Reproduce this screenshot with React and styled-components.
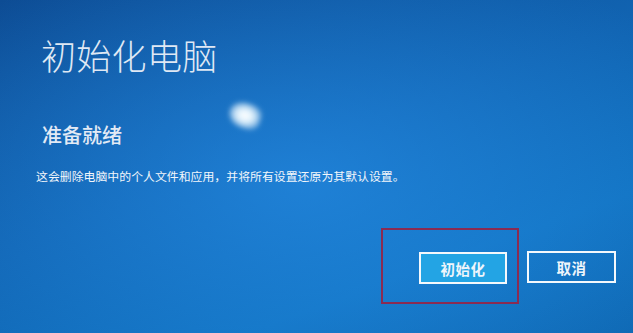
import React from 'react';
import styled, { createGlobalStyle } from 'styled-components';

const Global = createGlobalStyle`
  html, body {
    margin: 0;
    padding: 0;
    background: #0f5ca8;
  }
  body {
    font-family: "Noto Sans CJK SC", "Noto Sans", sans-serif;
  }
`;

const Screen = styled.div`
  position: relative;
  width: 633px;
  height: 333px;
  overflow: hidden;
  display: flex;
  flex-direction: column;
  color: #eef4fb;
  background:
    radial-gradient(ellipse 70% 75% at 48% 55%, rgba(40, 145, 235, 0.6), rgba(40, 140, 230, 0) 100%),
    linear-gradient(160deg, #0d4c94 0%, #1164b2 45%, #1172c0 75%, #0f69b4 100%);
`;

const Glare = styled.div`
  position: absolute;
  left: 229px;
  top: 103px;
  width: 32px;
  height: 25px;
  border-radius: 55% 45% 40% 60%;
  background: radial-gradient(ellipse at 50% 50%, #ffffff 0%, rgba(235, 248, 255, 0.95) 35%, rgba(120, 200, 255, 0) 100%);
  filter: blur(2.5px);
  transform: rotate(18deg);
`;

const Content = styled.div`
  display: flex;
  flex-direction: column;
  padding: 37px 0 0 41px;
`;

const Title = styled.h1`
  margin: 0;
  font-size: 35px;
  line-height: 35px;
  font-weight: 300;
  letter-spacing: 0.3px;
  color: #dfe8f4;
`;

const Subtitle = styled.h2`
  margin: 53px 0 0 1px;
  font-size: 20px;
  line-height: 20px;
  font-weight: 500;
  color: #e3eaf5;
`;

const Body = styled.p`
  margin: 24px 0 0 -5px;
  font-size: 11.9px;
  line-height: 13px;
  color: #f2f6fb;
`;

const Actions = styled.div`
  display: flex;
  justify-content: flex-end;
  align-items: flex-start;
  margin-top: 46px;
  padding-right: 17px;
`;

const Highlight = styled.div`
  display: flex;
  padding: 22px 10px 18px 36px;
  border: 2px solid #8a2b52;
`;

const Button = styled.button`
  width: ${p => p.$w}px;
  height: 32px;
  margin-top: ${p => p.$top || 0}px;
  margin-left: ${p => p.$left || 0}px;
  padding: 0;
  border: 2px solid #f4f8fc;
  background: ${p => (p.$primary ? '#23a4e4' : 'transparent')};
  color: #eef5fb;
  font-family: "Noto Sans CJK SC", sans-serif;
  font-size: 14.5px;
  font-weight: 700;
  letter-spacing: 0.5px;
  cursor: pointer;
`;

export default function App() {
  return (
    <>
      <Global />
      <Screen>
        <Glare />
        <Content>
          <Title>初始化电脑</Title>
          <Subtitle>准备就绪</Subtitle>
          <Body>这会删除电脑中的个人文件和应用，并将所有设置还原为其默认设置。</Body>
        </Content>
        <Actions>
          <Highlight>
            <Button $primary $w={88}>初始化</Button>
          </Highlight>
          <Button $w={89} $top={23} $left={8}>取消</Button>
        </Actions>
      </Screen>
    </>
  );
}
